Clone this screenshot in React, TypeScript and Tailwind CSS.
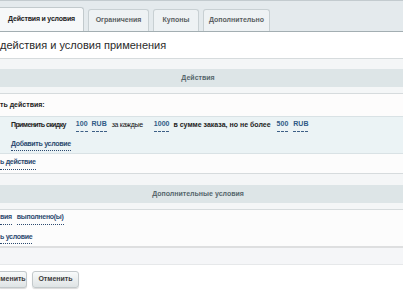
import React from 'react'

/* Вкладки формы правил корзины */
const tabs = [
	{ label: 'Действия и условия', active: true, w: 'w-[84px]' },
	{ label: 'Ограничения', active: false, w: 'w-[61px]' },
	{ label: 'Купоны', active: false, w: 'w-[46px]' },
	{ label: 'Дополнительно', active: false, w: 'w-[67px]' },
]

const Val = ({ children, className = '' }: { children: React.ReactNode; className?: string }) => (
	<span className={`border-b border-dashed border-[#3d5f86] pb-px font-bold text-[#2f5a86] ${className}`}>
		{children}
	</span>
)

const Link = ({ children }: { children: React.ReactNode }) => (
	<span className="border-b border-dotted border-[#2c4a70] pb-px font-bold tracking-[-0.3px] text-[#2c4a70]">
		{children}
	</span>
)

const SectionHeader = ({ title, pad }: { title: string; pad: string }) => (
	<div className={`border-y border-[#d6dbdd] bg-[#f4f6f7] ${pad}`}>
		<div className="flex h-[18px] items-center justify-center bg-[#dde5e7] pr-[7px] text-[7px] font-bold text-[#55666c]">
			{title}
		</div>
	</div>
)

export default function App() {
	return (
		<div className="h-[294px] w-[403px] overflow-hidden bg-white font-['Liberation_Sans',Arial,sans-serif] text-[#333]">
			{/* Tabs */}
			<div className="h-px bg-[#c3cbcf]" />
			<div className="flex h-[31px] items-end gap-[3px] border-b border-[#a3aeb2] bg-[#e4eaed]">
				{tabs.map((t) => (
					<div
						key={t.label}
						className={
							t.active
								? `${t.w} flex h-[24px] items-center justify-center rounded-tr-[3px] border-r border-t border-[#c2cacd] bg-[#f6f8f9] text-[7px] font-bold tracking-[-0.2px] text-[#222]`
								: `${t.w} ml-px flex h-[22px] items-center justify-center rounded-t-[3px] border-x border-t border-[#c8d0d3] bg-[#eef2f4] text-[7px] font-bold text-[#5a5f62]`
						}
					>
						{t.label}
					</div>
				))}
			</div>

			{/* Title */}
			<div className="flex h-[26px] items-center text-[11px] text-[#2a2a2a]">
				действия и условия применения
			</div>

			<SectionHeader title="Действия" pad="pt-[10px] pb-[6px]" />

			<div className="flex h-[22px] items-center bg-[#fdfcfc] text-[7px] font-bold text-[#222]">
				ть действия:
			</div>

			<div className="flex h-[38px] flex-col justify-center gap-[7px] border-y border-[#d9e2e5] bg-[#ebf3f5] pl-[11px] text-[7px]">
				<div className="flex items-center font-bold text-[#222]">
					<span className="tracking-[-0.6px]">Применить скидку</span>
					<Val className="ml-[10px]">100</Val>
					<Val className="ml-[4px]">RUB</Val>
					<span className="ml-[5px] font-normal tracking-[-0.3px] text-[#111]">за каждые</span>
					<Val className="ml-[11px]">1000</Val>
					<span className="ml-[4px]">в сумме заказа, но не более</span>
					<Val className="ml-[6px]">500</Val>
					<Val className="ml-[5px]">RUB</Val>
				</div>
				<div className="flex">
					<Link>Добавить условие</Link>
				</div>
			</div>

			<div className="flex h-[19px] items-center bg-[#fcfcfc] text-[7px]">
				<Link>ь действие</Link>
			</div>

			<SectionHeader title="Дополнительные условия" pad="pt-[11px] pb-[6px]" />

			<div className="flex h-[36px] flex-col justify-center gap-[7px] bg-[#fcfcfc] text-[7px]">
				<div className="flex gap-[5px]">
					<Link>вия</Link>
					<Link>выполнено(ы)</Link>
				</div>
				<div className="flex">
					<Link>ь условие</Link>
				</div>
			</div>

			<div className="h-[19px] border-t-2 border-b border-t-[#dedfe0] border-b-[#e6e8ea] bg-[#f5f6f8]" />

			{/* Buttons */}
			<div className="flex gap-[5px] pt-[6px]">
				<button className="flex h-[17px] w-[27px] items-center justify-center rounded-r-[3px] border border-l-0 border-[#c3c9cb] bg-gradient-to-b from-[#f8fafa] to-[#dfe4e5] text-[7px] font-bold text-[#3b3b3b] shadow-[0_1px_1px_rgba(0,0,0,0.15)]">
					менить
				</button>
				<button className="flex h-[17px] w-[47px] items-center justify-center rounded-[3px] border border-[#c3c9cb] bg-gradient-to-b from-[#f8fafa] to-[#dfe4e5] text-[7px] font-bold text-[#3b3b3b] shadow-[0_1px_1px_rgba(0,0,0,0.15)]">
					Отменить
				</button>
			</div>
		</div>
	)
}
